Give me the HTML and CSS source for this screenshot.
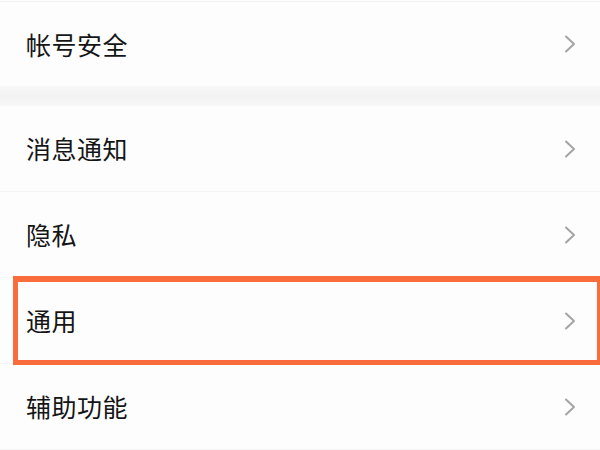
FILE: index.html
```html
<!DOCTYPE html>
<html lang="zh-CN">
<head>
<meta charset="utf-8">
<title>设置</title>
<link rel="stylesheet" href="styles.css">
</head>
<body>
<div class="page">
  <div class="group first">
    <div class="row">
      <span class="label">帐号安全</span>
      <svg class="chev" viewBox="0 0 12 18" width="12" height="18"><polyline points="2,1.5 10,9 2,16.5"/></svg>
    </div>
  </div>
  <div class="band"></div>
  <div class="group">
    <div class="row">
      <span class="label">消息通知</span>
      <svg class="chev" viewBox="0 0 12 18" width="12" height="18"><polyline points="2,1.5 10,9 2,16.5"/></svg>
    </div>
    <div class="row">
      <span class="label">隐私</span>
      <svg class="chev" viewBox="0 0 12 18" width="12" height="18"><polyline points="2,1.5 10,9 2,16.5"/></svg>
    </div>
    <div class="row marked">
      <span class="label">通用</span>
      <svg class="chev" viewBox="0 0 12 18" width="12" height="18"><polyline points="2,1.5 10,9 2,16.5"/></svg>
      <span class="highlight"></span>
    </div>
    <div class="row">
      <span class="label">辅助功能</span>
      <svg class="chev" viewBox="0 0 12 18" width="12" height="18"><polyline points="2,1.5 10,9 2,16.5"/></svg>
    </div>
  </div>
</div>
</body>
</html>
```
FILE: styles.css
```css
html, body {
  margin: 0;
  padding: 0;
  background: #fdfdfd;
}
.page {
  width: 600px;
  height: 450px;
  overflow: hidden;
  font-family: "Noto Sans CJK SC", "Noto Sans", sans-serif;
  color: #151515;
}
.group {
  display: flex;
  flex-direction: column;
  background: #fdfdfd;
}
.group.first {
  border-top: 1px solid #f2f2f2;
  margin-top: 1px;
}
.band {
  height: 20px;
  background: linear-gradient(#f8f8f8, #f1f1f1 50%, #f8f8f8);
}
.row {
  position: relative;
  height: 86px;
  display: flex;
  align-items: center;
  justify-content: space-between;
  padding: 0 24px 0 26px;
  box-sizing: border-box;
  border-bottom: 1px solid #f5f5f5;
}
.group.first .row {
  height: 84px;
  border-bottom: none;
}
.label {
  font-size: 25px;
  line-height: 1;
  letter-spacing: 0.5px;
}
.chev {
  fill: none;
  stroke: #a4a4a4;
  stroke-width: 2;
  stroke-linecap: round;
  stroke-linejoin: round;
}
.highlight {
  position: absolute;
  left: 13px;
  right: -2px;
  top: -2px;
  bottom: -2px;
  border: 5px solid #f96d3c;
  border-top-width: 6px;
  pointer-events: none;
}
```
